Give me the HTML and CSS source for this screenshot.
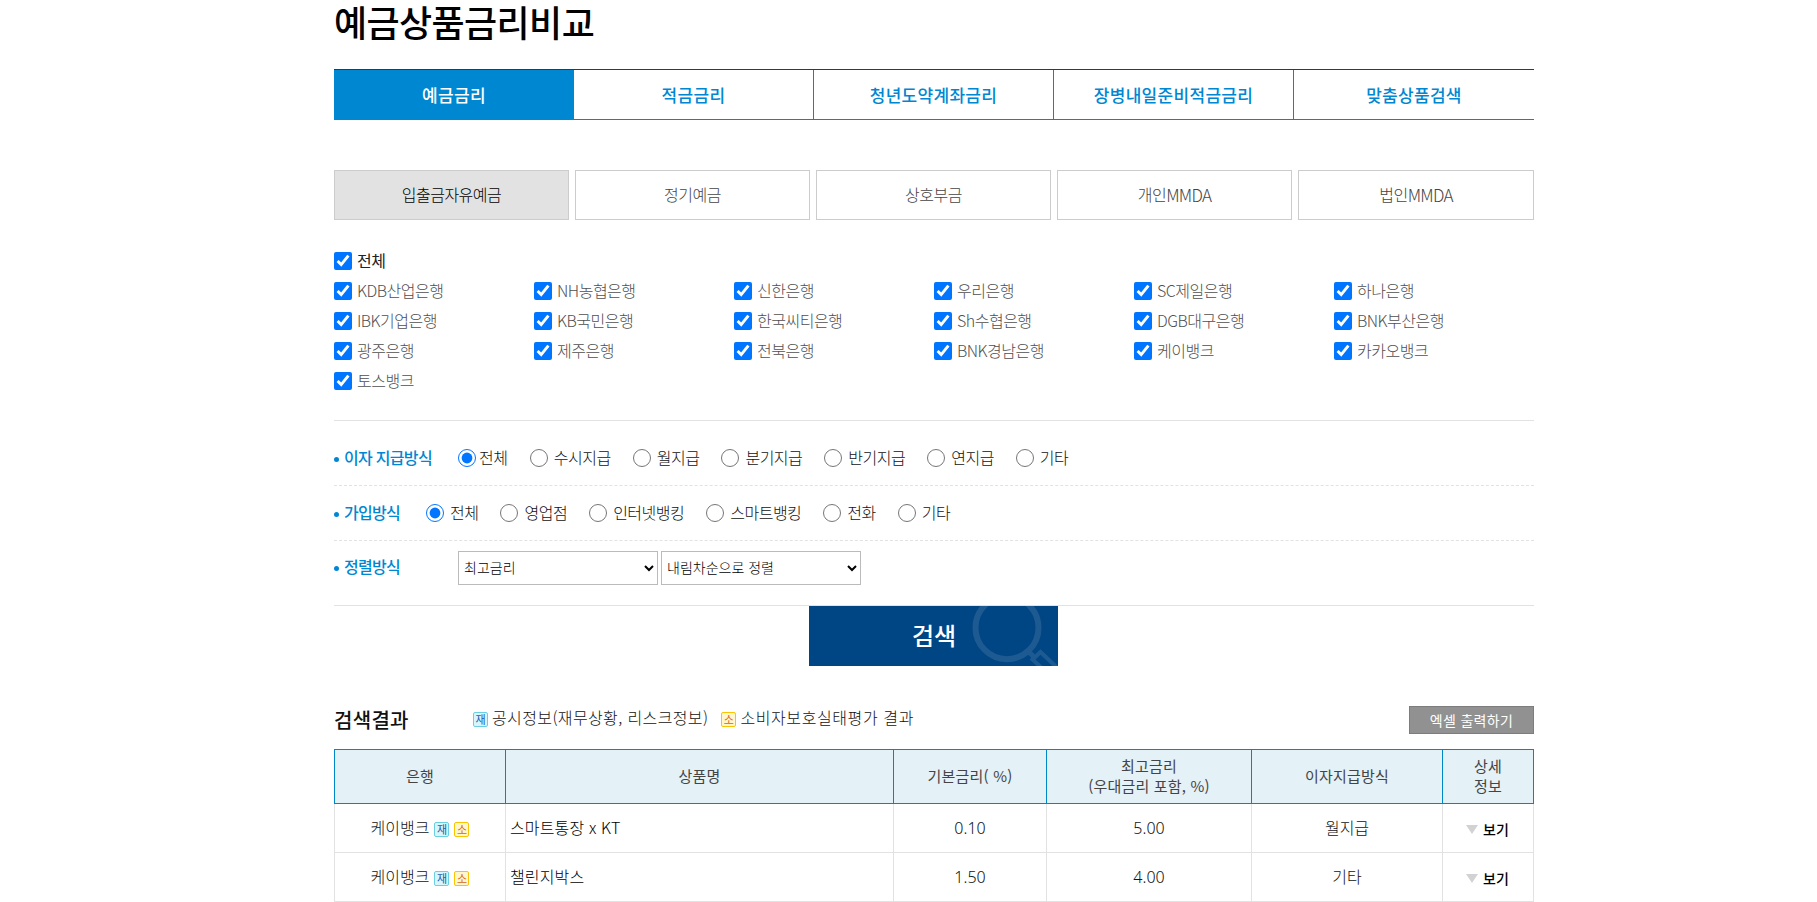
FILE: index.html
```html
<!DOCTYPE html>
<html lang="ko">
<head>
<meta charset="utf-8">
<title>예금상품금리비교</title>
<link rel="stylesheet" href="styles.css">
</head>
<body>
<main class="page">
  <h1 class="title">예금상품금리비교</h1>

  <nav class="tabs">
    <a class="tab on">예금금리</a><a class="tab">적금금리</a><a class="tab">청년도약계좌금리</a><a class="tab">장병내일준비적금금리</a><a class="tab">맞춤상품검색</a>
  </nav>

  <nav class="kinds">
    <a class="kind on">입출금자유예금</a><a class="kind">정기예금</a><a class="kind">상호부금</a><a class="kind">개인<span class="latin">MMDA</span></a><a class="kind">법인<span class="latin">MMDA</span></a>
  </nav>

  <section class="banks">
    <label class="bank all"><input type="checkbox" checked>전체</label>
    <label class="bank"><input type="checkbox" checked>KDB산업은행</label>
    <label class="bank"><input type="checkbox" checked>NH농협은행</label>
    <label class="bank"><input type="checkbox" checked>신한은행</label>
    <label class="bank"><input type="checkbox" checked>우리은행</label>
    <label class="bank"><input type="checkbox" checked>SC제일은행</label>
    <label class="bank"><input type="checkbox" checked>하나은행</label>
    <label class="bank"><input type="checkbox" checked>IBK기업은행</label>
    <label class="bank"><input type="checkbox" checked>KB국민은행</label>
    <label class="bank"><input type="checkbox" checked>한국씨티은행</label>
    <label class="bank"><input type="checkbox" checked>Sh수협은행</label>
    <label class="bank"><input type="checkbox" checked>DGB대구은행</label>
    <label class="bank"><input type="checkbox" checked>BNK부산은행</label>
    <label class="bank"><input type="checkbox" checked>광주은행</label>
    <label class="bank"><input type="checkbox" checked>제주은행</label>
    <label class="bank"><input type="checkbox" checked>전북은행</label>
    <label class="bank"><input type="checkbox" checked>BNK경남은행</label>
    <label class="bank"><input type="checkbox" checked>케이뱅크</label>
    <label class="bank"><input type="checkbox" checked>카카오뱅크</label>
    <label class="bank"><input type="checkbox" checked>토스뱅크</label>
  </section>

  <section class="filters">
    <div class="filter">
      <span class="name wide">이자 지급방식</span>
      <label class="opt tight"><input type="radio" name="pay" checked>전체</label>
      <label class="opt"><input type="radio" name="pay">수시지급</label>
      <label class="opt"><input type="radio" name="pay">월지급</label>
      <label class="opt"><input type="radio" name="pay">분기지급</label>
      <label class="opt"><input type="radio" name="pay">반기지급</label>
      <label class="opt"><input type="radio" name="pay">연지급</label>
      <label class="opt"><input type="radio" name="pay">기타</label>
    </div>
    <div class="filter">
      <span class="name">가입방식</span>
      <label class="opt"><input type="radio" name="join" checked>전체</label>
      <label class="opt"><input type="radio" name="join">영업점</label>
      <label class="opt"><input type="radio" name="join">인터넷뱅킹</label>
      <label class="opt"><input type="radio" name="join">스마트뱅킹</label>
      <label class="opt"><input type="radio" name="join">전화</label>
      <label class="opt"><input type="radio" name="join">기타</label>
    </div>
    <div class="filter sort">
      <span class="name wide">정렬방식</span>
      <select class="pick"><option>최고금리</option></select>
      <select class="pick"><option>내림차순으로 정렬</option></select>
    </div>
  </section>

  <button class="search" type="button">
    <span>검색</span>
    <svg class="lens" width="90" height="60" viewBox="0 0 90 60" fill="none" stroke="#1e5a92">
      <circle cx="39" cy="21.700" r="31.500" stroke-width="6"/>
      <path d="M60 45l6 6" stroke-width="5"/>
      <path d="M75 63L64.500 53.500l8-7.500 19 18" stroke-width="4"/>
    </svg>
  </button>

  <header class="result-head">
    <h2 class="subtitle">검색결과</h2>
    <span class="legend"><i class="badge fin">재</i>공시정보(재무상황, 리스크정보)</span>
    <span class="legend second"><i class="badge con">소</i>소비자보호실태평가 결과</span>
    <button class="excel" type="button">엑셀 출력하기</button>
  </header>

  <table class="result">
    <colgroup><col class="c1"><col class="c2"><col class="c3"><col class="c4"><col class="c5"><col class="c6"></colgroup>
    <thead>
      <tr><th>은행</th><th>상품명</th><th>기본금리( %)</th><th>최고금리<br>(우대금리 포함, %)</th><th>이자지급방식</th><th>상세<br>정보</th></tr>
    </thead>
    <tbody>
      <tr>
        <td><span class="bankname">케이뱅크 <i class="badge fin">재</i><i class="badge con">소</i></span></td>
        <td class="product">스마트통장 x KT</td><td class="num">0.10</td><td class="num">5.00</td><td>월지급</td>
        <td><a class="view">보기</a></td>
      </tr>
      <tr>
        <td><span class="bankname">케이뱅크 <i class="badge fin">재</i><i class="badge con">소</i></span></td>
        <td class="product">챌린지박스</td><td class="num">1.50</td><td class="num">4.00</td><td>기타</td>
        <td><a class="view">보기</a></td>
      </tr>
    </tbody>
  </table>
</main>
</body>
</html>
```
FILE: styles.css
```css
* { box-sizing: border-box; }
body {
  margin: 0;
  background: #fff;
  color: #111;
  font-family: "Noto Sans CJK KR", sans-serif;
  font-size: 16px;
}
.page { width: 1200px; margin: 0 0 0 334px; }
.title {
  margin: 0;
  height: 69px;
  font-size: 36px;
  line-height: 42px;
  font-weight: 500;
  letter-spacing: -0.6px;
  color: #000;
}
.tabs {
  display: grid;
  grid-template-columns: 239px 240px 240px 240px 241px;
  height: 51px;
  border-top: 1px solid #004684;
  border-bottom: 1px solid #0087d2;
}
.tab {
  display: flex;
  align-items: center;
  justify-content: center;
  padding-bottom: 1px;
  border-left: 1px solid #0087d2;
  color: #0087d2;
  font-size: 17px;
  font-weight: 500;
  letter-spacing: 0.3px;
}
.tab.on { background: #0087d2; color: #fff; }
.kinds { display: grid; grid-template-columns: repeat(4, 235px) 236px; gap: 6px; margin-top: 50px; }
.kind {
  display: flex;
  align-items: center;
  justify-content: center;
  height: 50px;
  padding-bottom: 2px;
  border: 1px solid #ccc;
  color: #444;
  font-weight: 300;
  letter-spacing: -0.5px;
}
.latin { font-size: 17px; letter-spacing: -0.7px; }
.kind.on { background: #e2e2e2; color: #000; }
.banks {
  display: grid;
  grid-template-columns: repeat(6, 200px);
  grid-auto-rows: 30px;
  height: 201px;
  padding-top: 25px;
  border-bottom: 1px solid #e2e2e2;
}
.bank {
  display: flex;
  align-items: center;
  gap: 5px;
  color: #505050;
  font-weight: 300;
  letter-spacing: -0.5px;
}
.bank.all { grid-column: 1 / -1; color: #222; font-weight: 400; }
.bank input, .opt input { width: 18px; height: 18px; margin: 2px 0 0; flex: none; accent-color: #0075ff; }
.filters { border-bottom: 1px solid #e2e2e2; padding-top: 10px; }
.filter { display: flex; align-items: center; height: 55px; padding-bottom: 2px; border-bottom: 1px dashed #e2e2e2; }
.name {
  position: relative;
  width: 92px;
  padding-left: 10px;
  color: #0087d2;
  font-weight: 500;
  letter-spacing: -0.7px;
  white-space: nowrap;
}
.name::before {
  content: "";
  position: absolute;
  left: 0;
  top: 12px;
  width: 5px;
  height: 5px;
  border-radius: 50%;
  background: #0087d2;
}
.name.wide { width: 124px; }
.opt { display: flex; align-items: center; gap: 6px; margin-right: 22px; font-weight: 300; letter-spacing: -0.5px; }
.opt.tight { gap: 3px; margin-right: 22.400px; }
.filter.sort { height: 64px; padding-bottom: 11px; border-bottom: 0; }
.filter.sort .name { margin-bottom: 4px; }
.pick {
  width: 200px;
  height: 34px;
  margin-right: 3px;
  padding: 0 0 1px 1px;
  border: 1px solid #bbb;
  background: #fff;
  color: #000;
  font: 300 14px "Noto Sans CJK KR", sans-serif;
}
.search {
  position: relative;
  display: block;
  width: 249px;
  height: 60px;
  margin: 0 0 0 475px;
  padding: 0 0 3px 1px;
  border: 0;
  background: #004684;
  color: #fff;
  font: 500 24px "Noto Sans CJK KR", sans-serif;
  overflow: hidden;
}
.lens { position: absolute; left: 159px; top: 0; }
.result-head { display: flex; align-items: flex-start; height: 83px; padding-top: 39px; }
.subtitle { width: 139px; margin: 0; font-size: 20px; line-height: 30px; font-weight: 500; letter-spacing: 0.3px; }
.legend { display: flex; align-items: center; height: 24px; font-weight: 300; letter-spacing: 0.38px; }
.legend.second { margin-left: 13px; letter-spacing: 0.6px; }
.legend .badge { margin: 5px 4px 0 0; }
.badge {
  display: inline-block;
  width: 15px;
  height: 15px;
  border: 1px solid;
  border-radius: 2px;
  font-size: 11px;
  line-height: 12px;
  font-style: normal;
  font-weight: 400;
  letter-spacing: 0;
  text-align: center;
}
.fin { border-color: #6ccfe0; background: #d9f5fc; color: #1a5cae; }
.con { border-color: #fac400; background: #fff6cc; color: #d2661e; }
.excel {
  width: 125px;
  height: 28px;
  margin: 1px 0 0 auto;
  padding: 0 0 1px;
  border: 1px solid #7d7d7d;
  background: #919191;
  color: #fff;
  font: 400 14px "Noto Sans CJK KR", sans-serif;
  letter-spacing: 0.3px;
}
.result { width: 1200px; table-layout: fixed; border-collapse: collapse; }
.c1 { width: 171px; }
.c2 { width: 388px; }
.c3 { width: 153px; }
.c4 { width: 205px; }
.c5 { width: 191px; }
.c6 { width: 91px; }
.result th {
  height: 54px;
  padding: 0 0 1px;
  border: 1px solid #0087c8;
  background: #e4f1f7;
  color: #444;
  font-size: 15px;
  line-height: 20px;
  font-weight: 400;
  letter-spacing: 0.2px;
}
.result td { height: 49px; padding: 0 0 2px; border: 1px solid #e2e2e2; text-align: center; font-weight: 300; }
.result thead + tbody tr:first-child td { border-top-color: #0087c8; }
.result td.product { padding-left: 4px; text-align: left; color: #000; letter-spacing: 0.15px; }
.bankname { display: inline-flex; align-items: center; }
.bankname .badge { margin: 5px 0 0 5px; }
.result td.num { padding-bottom: 0; font-family: "Noto Sans", sans-serif; }
.view { display: inline-flex; align-items: center; gap: 5px; padding-right: 1px; color: #000; font-size: 14px; font-weight: 500; }
.view::before { content: ""; border: 6px solid transparent; border-top: 9px solid #d2d2d2; border-bottom: 0; }
```
